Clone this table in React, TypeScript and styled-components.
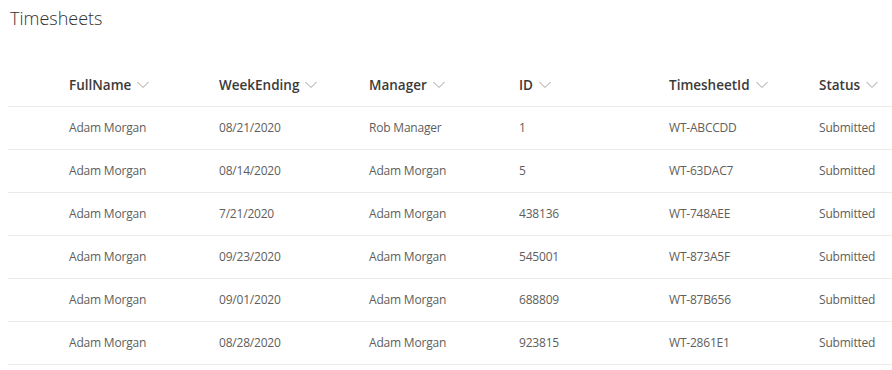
import React from 'react';
import styled, { createGlobalStyle } from 'styled-components';

const GlobalStyle = createGlobalStyle`
  body {
    margin: 0;
    background: #ffffff;
    font-family: 'Open Sans', 'Liberation Sans', sans-serif;
  }
`;

const Page = styled.div`
  padding: 0 0 0 8px;
`;

const Title = styled.h1`
  margin: 0;
  padding: 4px 0 0 2px;
  height: 64px;
  box-sizing: border-box;
  font-size: 18px;
  font-weight: 300;
  color: #323130;
  line-height: 28px;
`;

const Row = styled.div`
  display: grid;
  grid-template-columns: 48px repeat(5, 150px) 1fr;
  height: 42px;
  border-bottom: 1px solid #edebe9;
  align-items: center;
`;

const HeaderCell = styled.div`
  display: flex;
  align-items: center;
  gap: 6px;
  padding-left: 13px;
  font-size: 13.5px;
  font-weight: 600;
  color: #3b3a39;
  white-space: nowrap;
`;

const Cell = styled.div`
  padding-left: 13px;
  padding-bottom: 1px;
  font-size: 12px;
  letter-spacing: -0.2px;
  color: #605e5c;
  white-space: nowrap;
`;

const Chevron = () => (
  <svg width="12" height="8" viewBox="0 0 12 8">
    <polyline points="0.5,1 6,6.5 11.5,1" fill="none" stroke="#a19f9d" strokeWidth="1" />
  </svg>
);

const columns = ['FullName', 'WeekEnding', 'Manager', 'ID', 'TimesheetId', 'Status'];

const rows = [
  ['Adam Morgan', '08/21/2020', 'Rob Manager', '1', 'WT-ABCCDD', 'Submitted'],
  ['Adam Morgan', '08/14/2020', 'Adam Morgan', '5', 'WT-63DAC7', 'Submitted'],
  ['Adam Morgan', '7/21/2020', 'Adam Morgan', '438136', 'WT-748AEE', 'Submitted'],
  ['Adam Morgan', '09/23/2020', 'Adam Morgan', '545001', 'WT-873A5F', 'Submitted'],
  ['Adam Morgan', '09/01/2020', 'Adam Morgan', '688809', 'WT-87B656', 'Submitted'],
  ['Adam Morgan', '08/28/2020', 'Adam Morgan', '923815', 'WT-2861E1', 'Submitted'],
];

export default function App() {
  return (
    <Page>
      <GlobalStyle />
      <Title>Timesheets</Title>
      <Row>
        <div />
        {columns.map((c) => (
          <HeaderCell key={c}>
            {c}
            <Chevron />
          </HeaderCell>
        ))}
      </Row>
      {rows.map((r) => (
        <Row key={r[4]}>
          <div />
          {r.map((v, i) => (
            <Cell key={i}>{v}</Cell>
          ))}
        </Row>
      ))}
    </Page>
  );
}
